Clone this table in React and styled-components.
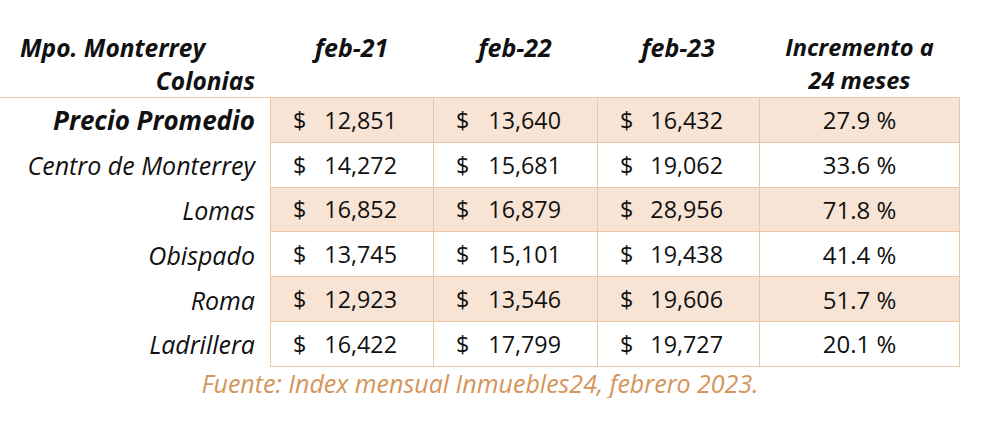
import React from "react";
import styled, { createGlobalStyle } from "styled-components";

const Global = createGlobalStyle`
  html, body { margin: 0; padding: 0; background: #ffffff; }
  body { font-family: "Open Sans", Lato, sans-serif; color: #111; }
`;

const COLS = "270px 163px 164px 162px 201px";

const Page = styled.div`
  width: 960px;
  padding-top: 31px;
`;

const HeaderRow = styled.div`
  display: grid;
  grid-template-columns: ${COLS};
  height: 66px;
`;

const HeadLabel = styled.div`
  display: flex;
  flex-direction: column;
  padding: 0 15px 0 20px;
  font-weight: 700;
  font-style: italic;
  font-size: 24.5px;
  line-height: 33px;
  white-space: nowrap;
`;

const HeadLine = styled.span`
  text-align: ${(p) => p.$align || "left"};
`;

const HeadCell = styled.div`
  text-align: center;
  font-weight: 700;
  font-style: italic;
  font-size: ${(p) => (p.$small ? "23.6px" : "25px")};
  line-height: 33px;
  white-space: nowrap;
`;

const Body = styled.div`
  display: grid;
  grid-template-columns: ${COLS};
  grid-auto-rows: 44.8px;
  border-top: 1px solid #e9c7a7;
`;

const Label = styled.div`
  display: flex;
  align-items: center;
  justify-content: flex-end;
  padding-right: 15px;
  font-style: italic;
  font-weight: ${(p) => (p.$strong ? 700 : 400)};
  font-size: ${(p) => (p.$strong ? "26px" : "25px")};
  white-space: nowrap;
`;

const Cell = styled.div`
  display: flex;
  align-items: center;
  justify-content: ${(p) => (p.$center ? "center" : "space-between")};
  padding: ${(p) => (p.$center ? "0" : "0 36px 0 22px")};
  background: ${(p) => (p.$fill ? "#f7e4d5" : "#ffffff")};
  border-left: 1px solid #e9c7a7;
  border-bottom: 1px solid #e9c7a7;
  border-right: ${(p) => (p.$last ? "1px solid #e9c7a7" : "none")};
  font-size: ${(p) => (p.$center ? "24px" : "23.3px")};
  color: #111;
`;

const Footer = styled.div`
  text-align: center;
  font-style: italic;
  font-size: 25px;
  line-height: 30px;
  color: #d4955a;
  margin-top: 1px;
`;

const rows = [
  { name: "Precio Promedio", strong: true, v: ["12,851", "13,640", "16,432"], p: "27.9 %" },
  { name: "Centro de Monterrey", v: ["14,272", "15,681", "19,062"], p: "33.6 %" },
  { name: "Lomas", v: ["16,852", "16,879", "28,956"], p: "71.8 %" },
  { name: "Obispado", v: ["13,745", "15,101", "19,438"], p: "41.4 %" },
  { name: "Roma", v: ["12,923", "13,546", "19,606"], p: "51.7 %" },
  { name: "Ladrillera", v: ["16,422", "17,799", "19,727"], p: "20.1 %" },
];

export default function App() {
  return (
    <Page>
      <Global />
      <HeaderRow>
        <HeadLabel>
          <HeadLine>Mpo. Monterrey</HeadLine>
          <HeadLine $align="right">Colonias</HeadLine>
        </HeadLabel>
        <HeadCell>feb-21</HeadCell>
        <HeadCell>feb-22</HeadCell>
        <HeadCell>feb-23</HeadCell>
        <HeadCell $small>
          Incremento a<br />24 meses
        </HeadCell>
      </HeaderRow>
      <Body>
        {rows.map((r, i) => {
          const fill = i % 2 === 0;
          return (
            <React.Fragment key={r.name}>
              <Label $strong={r.strong}>{r.name}</Label>
              {r.v.map((val, j) => (
                <Cell key={j} $fill={fill}>
                  <span>$</span>
                  <span>{val}</span>
                </Cell>
              ))}
              <Cell $fill={fill} $center $last>
                {r.p}
              </Cell>
            </React.Fragment>
          );
        })}
      </Body>
      <Footer>Fuente: Index mensual Inmuebles24, febrero 2023.</Footer>
    </Page>
  );
}
